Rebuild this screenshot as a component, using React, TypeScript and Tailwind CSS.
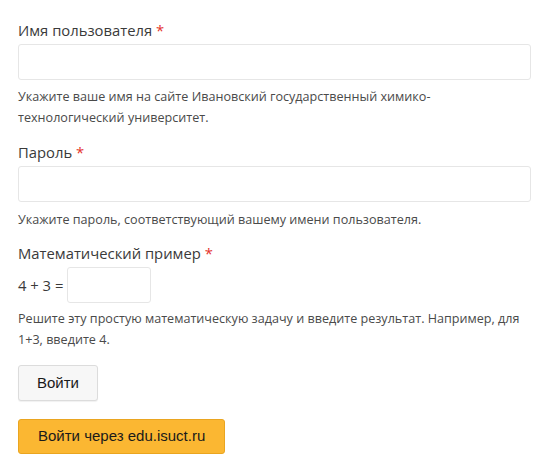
import React from "react";

function Label({ children }: { children: React.ReactNode }) {
  return (
    <div className="text-[14.8px] leading-[24px] text-[#3a3a3a]">
      {children} <span className="text-[#e4322b]">*</span>
    </div>
  );
}

export default function App() {
  return (
    <div
      className="w-[550px] h-[472px] bg-white pl-[18px] pr-[19px] pt-[18px]"
      style={{ fontFamily: '"Open Sans", "Noto Sans", sans-serif' }}
    >
      <Label>Имя пользователя</Label>
      <div className="mt-[2px] h-[36px] w-full rounded-[3px] border border-[#e6e6e6] bg-white" />
      <p className="mt-[6px] text-[12.6px] leading-[21px] text-[#4a4a4a]">
        Укажите ваше имя на сайте Ивановский государственный химико-технологический университет.
      </p>

      <div className="mt-[12px]">
        <Label>Пароль</Label>
      </div>
      <div className="mt-[2px] h-[36px] w-full rounded-[3px] border border-[#e6e6e6] bg-white" />
      <p className="mt-[7px] text-[12.6px] leading-[21px] text-[#4a4a4a]">
        Укажите пароль, соответствующий вашему имени пользователя.
      </p>

      <div className="mt-[11px]">
        <Label>Математический пример</Label>
      </div>
      <div className="mt-[2px] flex items-center gap-[4px]">
        <span className="text-[14.8px] leading-[24px] text-[#3a3a3a]">4 + 3 =</span>
        <div className="h-[36px] w-[84px] rounded-[3px] border border-[#e6e6e6] bg-white" />
      </div>
      <p className="mt-[5px] text-[12.6px] leading-[21px] text-[#4a4a4a]">
        Решите эту простую математическую задачу и введите результат. Например, для 1+3, введите 4.
      </p>

      <div
        className="mt-[15px] flex flex-col items-start gap-[18px]"
        style={{ fontFamily: '"Liberation Sans", Arial, sans-serif' }}
      >
        <button className="h-[36px] rounded-[3px] border border-[#dcdcdc] bg-[#f7f7f7] px-[18px] text-[15px] text-[#1a1a1a] shadow-[0_1px_1px_rgba(0,0,0,0.06)]">
          Войти
        </button>
        <button className="h-[35px] rounded-[3px] border border-[#eaa520] bg-[#fbb732] px-[19px] text-[15px] text-[#1a1a1a]">
          Войти через edu.isuct.ru
        </button>
      </div>
    </div>
  );
}
